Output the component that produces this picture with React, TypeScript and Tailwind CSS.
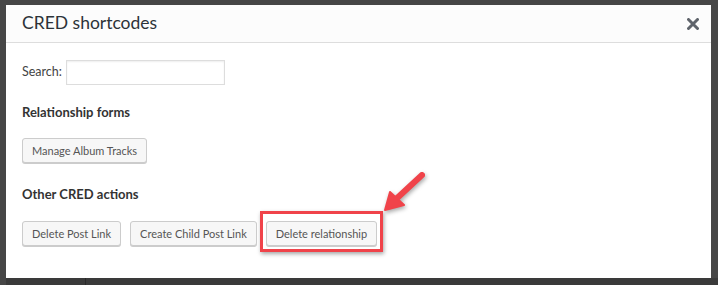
const BTN =
  "h-[25px] rounded-[3px] border border-[#cccccc] bg-[#f7f7f7] px-[9px] text-[11px] leading-[23px] text-[#555555] shadow-[0_1px_0_#cccccc]";

function Arrow() {
  return (
    <svg
      className="pointer-events-none absolute left-[378px] top-[168px]"
      width="52"
      height="50"
      viewBox="0 0 52 50"
      fill="none"
    >
      <g style={{ filter: "drop-shadow(1px 2px 2px rgba(0,0,0,0.35))" }}>
        <path d="M44 7 L17 32" stroke="#f0434a" strokeWidth="6" strokeLinecap="round" />
        <path d="M7 42 L12 24 L26 37 Z" fill="#f0434a" stroke="#f0434a" strokeWidth="2" strokeLinejoin="round" />
      </g>
    </svg>
  );
}

export default function App() {
  return (
    <div
      className="relative h-[285px] w-[718px] overflow-hidden bg-[#464646]"
      style={{ fontFamily: 'Lato, "Noto Sans", Arial, sans-serif' }}
    >
      <div className="flex h-full flex-col pl-[6px] pt-[5px]">
        <div className="flex h-[273px] w-[705px] flex-col bg-white">
          {/* Header */}
          <div className="flex h-[38px] items-center justify-between border-b border-[#dddddd] bg-[#fcfcfc] pl-[16px] pr-[12px]">
            <h1 className="text-[17.5px] font-normal text-[#2c3338]">CRED shortcodes</h1>
            <svg width="12" height="12" viewBox="0 0 12 12">
              <path d="M1.5 1.5 L10.5 10.5 M10.5 1.5 L1.5 10.5" stroke="#5f646b" strokeWidth="3" strokeLinecap="round" />
            </svg>
          </div>

          {/* Body */}
          <div className="flex flex-col px-[16px] pt-[17px] text-[#444444]">
            <div className="flex items-center gap-[4px]">
              <label className="text-[12.5px]">Search:</label>
              <input
                type="text"
                className="h-[25px] w-[159px] border border-[#dddddd] bg-white px-[4px] text-[13px] shadow-[inset_0_1px_2px_rgba(0,0,0,0.07)] outline-none"
              />
            </div>

            <h2 className="mt-[18px] text-[13px] font-bold text-[#333333]">Relationship forms</h2>
            <div className="mt-[15px] flex">
              <button type="button" className={BTN}>
                Manage Album Tracks
              </button>
            </div>

            <h2 className="mt-[22px] text-[13px] font-bold text-[#333333]">Other CRED actions</h2>
            <div className="mt-[7px] flex items-start">
              <div className="pt-[9px]">
                <button type="button" className={BTN}>
                  Delete Post Link
                </button>
              </div>
              <div className="ml-[9px] pt-[9px]">
                <button type="button" className={BTN}>
                  Create Child Post Link
                </button>
              </div>
              <div className="ml-[3px] border-[3px] border-[#f0434a] px-[3px] pb-[3px] pt-[6px] shadow-[1px_2px_4px_rgba(0,0,0,0.35)]">
                <button type="button" className={BTN}>
                  Delete relationship
                </button>
              </div>
            </div>
          </div>
        </div>
        <div className="flex flex-1 bg-[#3a3a3a]">
          <div className="w-[80px] border-r border-[#2a2a2a]" />
        </div>
      </div>
      <Arrow />
    </div>
  );
}
